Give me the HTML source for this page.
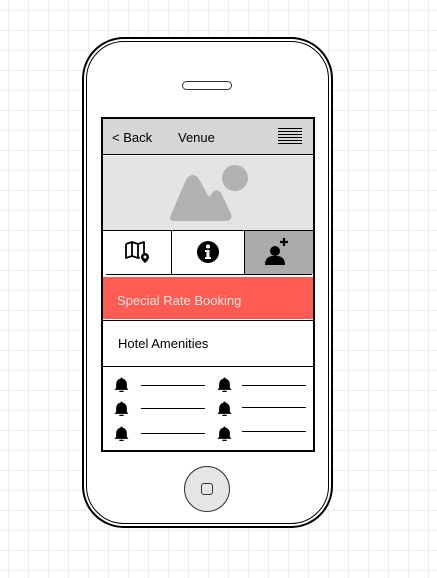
<!DOCTYPE html>
<html><head><style>
html,body{margin:0;padding:0}
body{width:437px;height:578px;position:relative;overflow:hidden;font-family:"Liberation Sans",sans-serif;
background-color:#fff;
background-image:linear-gradient(90deg,#ececec 1px,transparent 1px),linear-gradient(#ececec 1px,transparent 1px);
background-size:20px 20px;background-position:8px 10px;}
.a{position:absolute;box-sizing:border-box}
.line{position:absolute;background:#000;height:1px}
.bell{position:absolute;width:15px;height:15px}
</style></head><body>
<div class="a" style="left:82px;top:37px;width:251px;height:491px;border:2px solid #000;border-radius:42px;background:#fff"></div>
<div class="a" style="left:86px;top:41px;width:243px;height:483px;border:1px solid #000;border-radius:38px"></div>
<div class="a" style="left:182px;top:81px;width:50px;height:9px;border:1px solid #333;border-radius:5px;background:#fff"></div>
<div class="a" style="left:101px;top:117px;width:214px;height:335px;border:2px solid #000;background:#fff"></div>
<div class="a" style="left:103px;top:119px;width:210px;height:36px;background:#d6d6d6;border-bottom:1px solid #000"></div>
<div class="a" style="left:112px;top:130px;font-size:13px">&lt; Back</div>
<div class="a" style="left:178px;top:130px;font-size:13px">Venue</div>
<svg class="a" style="left:278px;top:128px" width="24" height="18"><g stroke="#000" stroke-width="1"><path d="M0 .5H24M0 3.5H24M0 6.5H24M0 9.5H24M0 12.5H24M0 15.5H24"/></g></svg>
<div class="a" style="left:103px;top:156px;width:210px;height:74px;background:#e4e4e4"></div>
<svg class="a" style="left:165px;top:162px" width="90" height="62"><circle cx="70" cy="16" r="13" fill="#b1b1b1"/><path d="M6 53 L20 20 Q23 13 28 13 Q32 13 35 19 L44 35 L48 30 Q52 26 56 31 L66 52 Q68 59 60 59 L10 59 Q3 59 6 53Z" fill="#b1b1b1"/></svg>
<div class="a" style="left:103px;top:230px;width:210px;height:1px;background:#000"></div>
<div class="a" style="left:244px;top:231px;width:69px;height:43px;background:#ababab"></div>
<div class="a" style="left:171px;top:231px;width:1px;height:43px;background:#000"></div>
<div class="a" style="left:244px;top:231px;width:1px;height:43px;background:#000"></div>
<div class="a" style="left:106px;top:274px;width:206px;height:1px;background:#000"></div>
<svg class="a" style="left:124px;top:240px" width="30" height="26"><path d="M2 4 L8 2 L14 4 L20 2 L20 13 M14 4 V18 M8 2 V16 M2 4 V18 L8 16 L14 18 L16 17.5" fill="none" stroke="#000" stroke-width="1.8" stroke-linejoin="round"/><path d="M21 13a4 4 0 0 1 4 4c0 3-4 6-4 6s-4-3-4-6a4 4 0 0 1 4-4z" fill="#000"/><circle cx="21" cy="17" r="1.5" fill="#fff"/></svg>
<svg class="a" style="left:196px;top:240px" width="24" height="24"><circle cx="12" cy="12" r="11" fill="#000"/><circle cx="12" cy="6.5" r="2" fill="#fff"/><path d="M9 10H13.5V17H15V19H9V17H10.5V12H9Z" fill="#fff"/></svg>
<svg class="a" style="left:262px;top:237px" width="30" height="28"><circle cx="13" cy="14" r="5" fill="#000"/><path d="M3 28 Q3 20 10 19 L16 19 Q23 20 23 28Z" fill="#000"/><path d="M22 1V9M18 5H26" stroke="#000" stroke-width="2.2"/></svg>
<div class="a" style="left:103px;top:277px;width:210px;height:42px;background:#fe5b52"></div>
<div class="a" style="left:117px;top:293px;font-size:13px;color:#fde7e4">Special Rate Booking</div>
<div class="a" style="left:103px;top:320px;width:210px;height:1px;background:#000"></div>
<div class="a" style="left:118px;top:336px;font-size:13px">Hotel Amenities</div>
<div class="a" style="left:103px;top:366px;width:210px;height:1px;background:#000"></div>
<svg width="0" height="0" style="position:absolute"><defs><symbol id="b" viewBox="0 0 14 14"><path d="M7 0.5 Q8 .5 8 1.5 Q12 2.5 12 7 V10 L13.5 12 H0.5 L2 10 V7 Q2 2.5 6 1.5 Q6 .5 7 .5Z" fill="#000"/><rect x="5" y="12.8" width="4" height="1.2" fill="#000"/></symbol></defs></svg>
<svg class="bell" style="left:114px;top:377px"><use href="#b"/></svg>
<svg class="bell" style="left:114px;top:401px"><use href="#b"/></svg>
<svg class="bell" style="left:114px;top:426px"><use href="#b"/></svg>
<svg class="bell" style="left:217px;top:377px"><use href="#b"/></svg>
<svg class="bell" style="left:217px;top:401px"><use href="#b"/></svg>
<svg class="bell" style="left:217px;top:426px"><use href="#b"/></svg>
<div class="line" style="left:141px;top:385px;width:64px"></div>
<div class="line" style="left:141px;top:408px;width:64px"></div>
<div class="line" style="left:141px;top:433px;width:64px"></div>
<div class="line" style="left:242px;top:385px;width:64px"></div>
<div class="line" style="left:242px;top:407px;width:64px"></div>
<div class="line" style="left:242px;top:431px;width:64px"></div>
<div class="a" style="left:184px;top:466px;width:46px;height:46px;border:1px solid #333;border-radius:50%;background:#e6e6e6"></div>
<div class="a" style="left:201px;top:483px;width:12px;height:12px;border:1px solid #333;border-radius:3px"></div>
</body></html>
